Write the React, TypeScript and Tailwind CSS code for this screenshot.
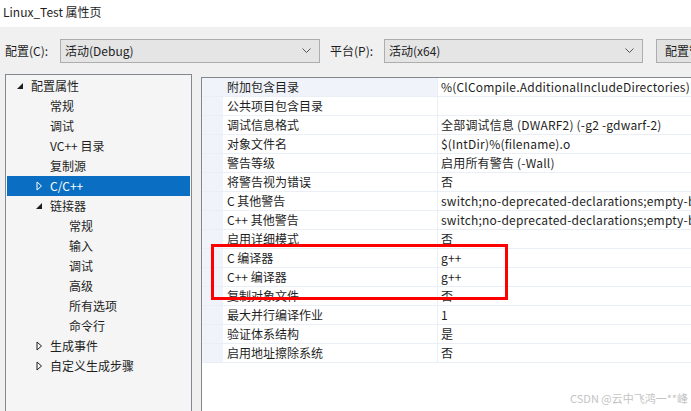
import React from 'react';

type TreeItem = {
  label: string;
  level: number;
  arrow?: 'open' | 'closed';
  selected?: boolean;
};

const tree: TreeItem[] = [
  { label: '配置属性', level: 0, arrow: 'open' },
  { label: '常规', level: 1 },
  { label: '调试', level: 1 },
  { label: 'VC++ 目录', level: 1 },
  { label: '复制源', level: 1 },
  { label: 'C/C++', level: 1, arrow: 'closed', selected: true },
  { label: '链接器', level: 1, arrow: 'open' },
  { label: '常规', level: 2 },
  { label: '输入', level: 2 },
  { label: '调试', level: 2 },
  { label: '高级', level: 2 },
  { label: '所有选项', level: 2 },
  { label: '命令行', level: 2 },
  { label: '生成事件', level: 1, arrow: 'closed' },
  { label: '自定义生成步骤', level: 1, arrow: 'closed' },
];

const props: [string, string][] = [
  ['附加包含目录', '%(ClCompile.AdditionalIncludeDirectories)'],
  ['公共项目包含目录', ''],
  ['调试信息格式', '全部调试信息 (DWARF2) (-g2 -gdwarf-2)'],
  ['对象文件名', '$(IntDir)%(filename).o'],
  ['警告等级', '启用所有警告 (-Wall)'],
  ['将警告视为错误', '否'],
  ['C 其他警告', 'switch;no-deprecated-declarations;empty-body'],
  ['C++ 其他警告', 'switch;no-deprecated-declarations;empty-body'],
  ['启用详细模式', '否'],
  ['C 编译器', 'g++'],
  ['C++ 编译器', 'g++'],
  ['复制对象文件', '否'],
  ['最大并行编译作业', '1'],
  ['验证体系结构', '是'],
  ['启用地址擦除系统', '否'],
];

function Arrow({ kind, selected }: { kind: 'open' | 'closed'; selected?: boolean }) {
  if (kind === 'open') {
    return (
      <svg width="7" height="7" viewBox="0 0 7 7">
        <polygon points="6,0 6,6 0,6" fill="#1e1e1e" />
      </svg>
    );
  }
  return (
    <svg width="7" height="10" viewBox="0 0 7 10">
      <polygon points="1,1 5.5,5 1,9" fill="none" stroke={selected ? '#ffffff' : '#1e1e1e'} strokeWidth="1" />
    </svg>
  );
}

function Combo({ value, width }: { value: string; width: string }) {
  return (
    <div className={`${width} shrink-0 h-[24px] flex items-center justify-between bg-[#e5e5e5] border border-[#adadad] pl-[4px] pr-[8px]`}>
      <span>{value}</span>
      <svg width="9" height="6" viewBox="0 0 9 6">
        <polyline points="0.5,0.5 4.5,4.5 8.5,0.5" fill="none" stroke="#555" strokeWidth="1" />
      </svg>
    </div>
  );
}

export default function App() {
  return (
    <div
      className="relative w-[691px] h-[411px] overflow-hidden bg-[#f0f0f0] text-[12px] text-[#1e1e1e]"
      style={{ fontFamily: '"Noto Sans CJK SC", "Noto Sans", sans-serif' }}
    >
      {/* Title */}
      <div className="h-[27px] bg-white flex items-center pl-[3px] pb-[3px]">Linux_Test 属性页</div>

      {/* Config row */}
      <div className="flex items-center mt-[12px] pl-[5px] whitespace-nowrap">
        <span className="w-[55px] shrink-0">配置(C):</span>
        <Combo value="活动(Debug)" width="w-[260px]" />
        <span className="ml-[10px] w-[54px] shrink-0">平台(P):</span>
        <Combo value="活动(x64)" width="w-[259px]" />
        <div className="ml-[13px] w-[100px] shrink-0 h-[24px] bg-[#e1e1e1] border border-[#adadad] flex items-center pl-[8px]">
          配置管理器(O)...
        </div>
      </div>

      {/* Panels */}
      <div className="flex items-start mt-[11px]">
        <div className="ml-[5px] w-[187px] h-[360px] shrink-0 bg-[#f5f5f5] border border-[#828790] pt-[1px] px-[1px]">
          {tree.map((t, i) => (
            <div
              key={i}
              className={`h-[20px] flex items-center whitespace-nowrap ${t.selected ? 'bg-[#0a6fc2] text-white' : ''}`}
            >
              <div className={`${t.level === 0 ? 'w-[24px]' : t.level === 1 ? 'w-[43px]' : 'w-[62px]'} shrink-0 flex justify-end pr-[7px]`}>
                {t.arrow && <Arrow kind={t.arrow} selected={t.selected} />}
              </div>
              <span>{t.label}</span>
            </div>
          ))}
        </div>

        <div className="ml-[9px] mt-[3px] flex-1 min-w-0 h-[360px] bg-white border-l border-t border-[#828790] overflow-hidden">
          {props.map(([name, value], i) => (
            <div key={i} className="h-[19px] flex border-b border-[#eaeef5] whitespace-nowrap">
              <div className="w-[21px] shrink-0 bg-[#f0f3f9]" />
              <div className={`w-[215px] shrink-0 pl-[4px] flex items-center border-r border-[#eaeef5] ${i === 0 ? 'bg-[#f0f3f9]' : ''}`}>
                {name}
              </div>
              <div className="pl-[3px] flex items-center tracking-[0.2px]">{value}</div>
            </div>
          ))}
        </div>
      </div>

      {/* Annotation */}
      <div className="absolute left-[211px] top-[244px] w-[297px] h-[56px] border-[3px] border-[#ff0000]" />

      {/* Watermark */}
      <div className="absolute right-[3px] bottom-[5px] text-[#c4c4c4] text-[11px] whitespace-nowrap">
        CSDN @云中飞鸿一**峰
      </div>
    </div>
  );
}
